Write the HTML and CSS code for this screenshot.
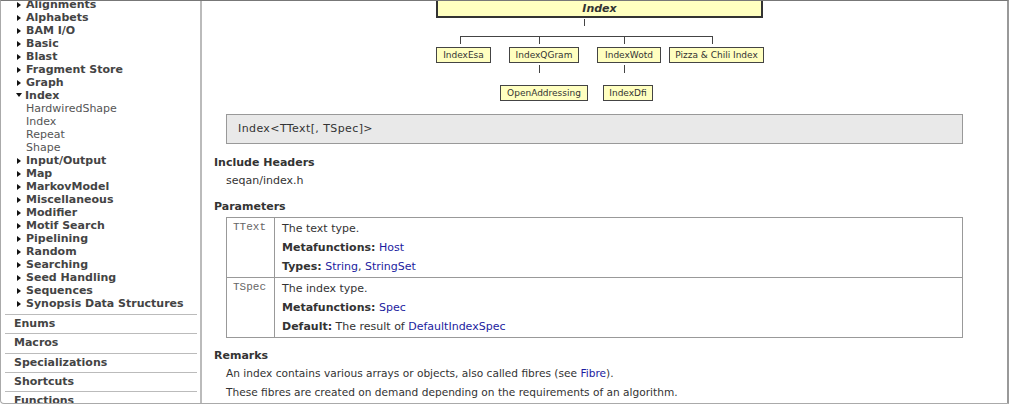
FILE: index.html
```html
<!DOCTYPE html>
<html>
<head>
<meta charset="utf-8">
<link rel="stylesheet" href="styles.css">
</head>
<body>
<div class="frame">
  <div class="sidebar">
    <ul class="tree">
      <li class="cat"><span class="tri"></span>Alignments</li>
      <li class="cat"><span class="tri"></span>Alphabets</li>
      <li class="cat"><span class="tri"></span>BAM I/O</li>
      <li class="cat"><span class="tri"></span>Basic</li>
      <li class="cat"><span class="tri"></span>Blast</li>
      <li class="cat"><span class="tri"></span>Fragment Store</li>
      <li class="cat"><span class="tri"></span>Graph</li>
      <li class="cat"><span class="tri down"></span>Index</li>
      <li class="sub">HardwiredShape</li>
      <li class="sub">Index</li>
      <li class="sub">Repeat</li>
      <li class="sub">Shape</li>
      <li class="cat"><span class="tri"></span>Input/Output</li>
      <li class="cat"><span class="tri"></span>Map</li>
      <li class="cat"><span class="tri"></span>MarkovModel</li>
      <li class="cat"><span class="tri"></span>Miscellaneous</li>
      <li class="cat"><span class="tri"></span>Modifier</li>
      <li class="cat"><span class="tri"></span>Motif Search</li>
      <li class="cat"><span class="tri"></span>Pipelining</li>
      <li class="cat"><span class="tri"></span>Random</li>
      <li class="cat"><span class="tri"></span>Searching</li>
      <li class="cat"><span class="tri"></span>Seed Handling</li>
      <li class="cat"><span class="tri"></span>Sequences</li>
      <li class="cat"><span class="tri"></span>Synopsis Data Structures</li>
    </ul>
    <ul class="sections">
      <li>Enums</li>
      <li>Macros</li>
      <li>Specializations</li>
      <li>Shortcuts</li>
      <li>Functions</li>
    </ul>
  </div>
  <div class="main">
    <div class="diagram">
      <div class="node root">Index</div>
      <div class="ln" style="left:382px;top:18px;width:1px;height:7px"></div>
      <div class="ln" style="left:258px;top:35px;width:253px;height:1px"></div>
      <div class="ln" style="left:258px;top:35px;width:1px;height:8px"></div>
      <div class="ln" style="left:337px;top:35px;width:1px;height:8px"></div>
      <div class="ln" style="left:422px;top:35px;width:1px;height:8px"></div>
      <div class="ln" style="left:510px;top:35px;width:1px;height:8px"></div>
      <div class="node" style="left:234px;top:46px;width:55px">IndexEsa</div>
      <div class="node" style="left:307px;top:46px;width:70px">IndexQGram</div>
      <div class="node" style="left:395px;top:46px;width:64px">IndexWotd</div>
      <div class="node" style="left:467px;top:46px;width:95px">Pizza &amp; Chili Index</div>
      <div class="ln" style="left:337px;top:64px;width:1px;height:8px"></div>
      <div class="ln" style="left:422px;top:64px;width:1px;height:8px"></div>
      <div class="node" style="left:298px;top:84px;width:88px">OpenAddressing</div>
      <div class="node" style="left:401px;top:84px;width:50px">IndexDfi</div>
    </div>
    <div class="sig">Index&lt;TText[, TSpec]&gt;</div>
    <h3 class="head first">Include Headers</h3>
    <p class="txt">seqan/index.h</p>
    <h3 class="head">Parameters</h3>
    <table class="params">
      <tr>
        <td class="pname">TText</td>
        <td class="pdesc">
          <div>The text type.</div>
          <div><b>Metafunctions:</b> <a>Host</a></div>
          <div><b>Types:</b> <a>String</a>, <a>StringSet</a></div>
        </td>
      </tr>
      <tr>
        <td class="pname">TSpec</td>
        <td class="pdesc">
          <div>The index type.</div>
          <div><b>Metafunctions:</b> <a>Spec</a></div>
          <div><b>Default:</b> The result of <a>DefaultIndexSpec</a></div>
        </td>
      </tr>
    </table>
    <h3 class="head rem">Remarks</h3>
    <p class="txt small">An index contains various arrays or objects, also called fibres (see <a>Fibre</a>).</p>
    <p class="txt small">These fibres are created on demand depending on the requirements of an algorithm.</p>
  </div>
</div>
</body>
</html>
```
FILE: styles.css
```css
html, body {
  margin: 0;
  padding: 0;
  background: #fff;
}
body {
  font-family: "DejaVu Sans", Verdana, sans-serif;
  font-size: 11px;
  color: #333;
  overflow: hidden;
}
.frame {
  box-sizing: border-box;
  width: 1009px;
  height: 404px;
  border-top: 1px solid #777;
  border-left: 1px solid #aaa;
  border-right: 2px solid #999;
  border-bottom: 1px solid #aaa;
  border-bottom-left-radius: 4px;
  display: flex;
  overflow: hidden;
}
.sidebar {
  width: 199px;
  flex: none;
  border-right: 2px solid #bbb;
  overflow: hidden;
}
.tree {
  list-style: none;
  margin: -3px 0 0 0;
  padding: 0;
}
.tree li {
  height: 13px;
  line-height: 13px;
  white-space: nowrap;
}
.cat {
  font-weight: bold;
  color: #444;
  padding-left: 16px;
}
.sub {
  color: #555;
  padding-left: 25px;
}
.tri {
  display: inline-block;
  width: 0;
  height: 0;
  border-left: 4px solid #111;
  border-top: 3.5px solid transparent;
  border-bottom: 3.5px solid transparent;
  margin-right: 5px;
  vertical-align: 0;
}
.tri.down {
  border-left: 3.5px solid transparent;
  border-right: 3.5px solid transparent;
  border-top: 4px solid #111;
  border-bottom: 0;
  margin-left: -1px;
  margin-right: 3px;
  vertical-align: 2px;
}
.sections {
  list-style: none;
  margin: 4px 3px 0 4px;
  padding: 0;
}
.sections li {
  border-top: 1px solid #bbb;
  height: 18.25px;
  line-height: 18px;
  padding-left: 9px;
  font-weight: bold;
  color: #444;
}
.main {
  flex: 1;
  padding-left: 12px;
  padding-right: 44px;
  overflow: hidden;
}
.diagram {
  position: relative;
  height: 113px;
  margin-left: -12px;
}
.node {
  position: absolute;
  box-sizing: border-box;
  height: 16px;
  border: 1px solid #444;
  background: #ffffc0;
  font-size: 9px;
  line-height: 14px;
  text-align: center;
  color: #333;
  white-space: nowrap;
}
.node.root {
  left: 234px;
  top: -13px;
  width: 327px;
  height: 30px;
  border: 2px solid #333;
  font-size: 11px;
  font-weight: bold;
  font-style: italic;
  line-height: 13px;
  display: flex;
  align-items: flex-end;
  justify-content: center;
  padding-bottom: 1px;
}
.ln {
  position: absolute;
  background: #444;
}
.sig {
  box-sizing: border-box;
  margin-left: 12px;
  height: 30px;
  border: 1px solid #999;
  background: #e9e9e9;
  padding-left: 11px;
  line-height: 28px;
  letter-spacing: 0.4px;
}
.head {
  margin: 10px 0 0 0;
  font-size: 11px;
  line-height: 13px;
  font-weight: bold;
  color: #333;
}
.head.first {
  margin-top: 12px;
}
.head.rem {
  margin-top: 11px;
}
.txt {
  margin: 2px 0 0 12px;
  line-height: 19px;
}
.txt + .txt {
  margin-top: 0;
}
.txt.small {
  font-size: 10.6px;
}
.params {
  margin: 4px 0 0 12px;
  width: calc(100% - 12px);
  border-collapse: collapse;
  border: 1px solid #999;
}
.params td {
  border: 1px solid #999;
  vertical-align: top;
  padding: 1px 6px 1px 6px;
  line-height: 19px;
}
.pname {
  width: 35px;
  font-family: "Liberation Mono", monospace;
  font-size: 11px;
  color: #666;
  line-height: 17px !important;
}
.pdesc {
  padding-left: 7px !important;
}
.pdesc div {
  height: 19px;
}
a {
  color: #1c1ca0;
  text-decoration: none;
}
b {
  color: #333;
}
```
